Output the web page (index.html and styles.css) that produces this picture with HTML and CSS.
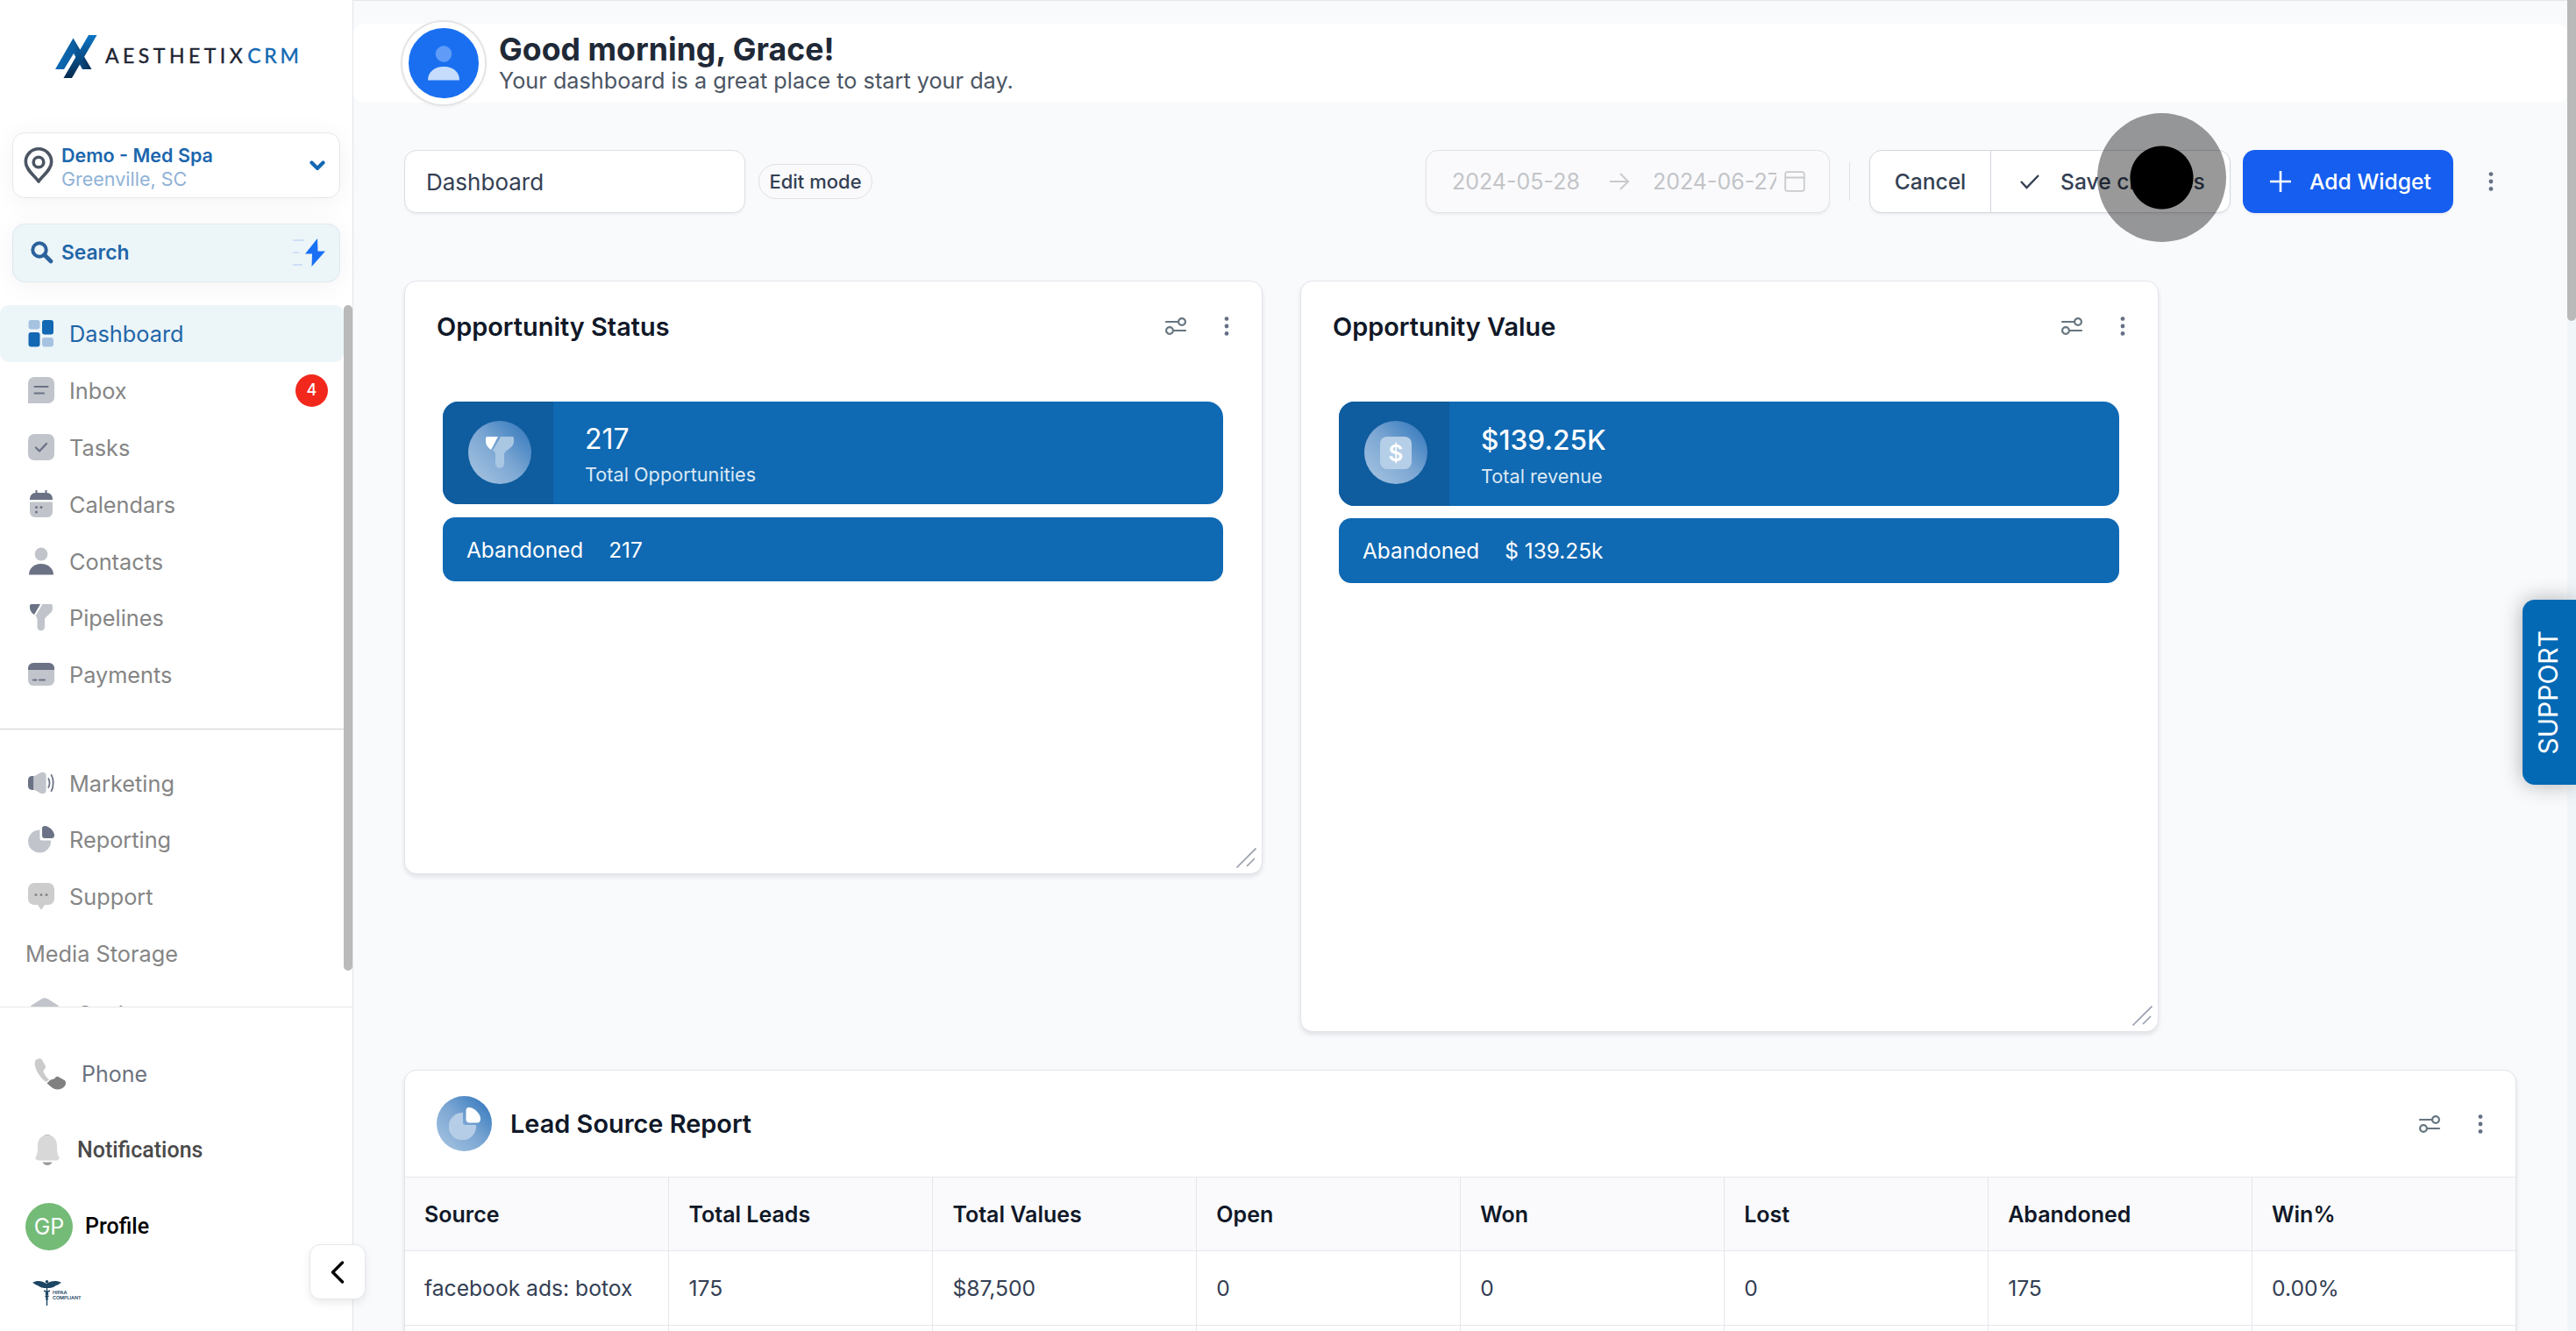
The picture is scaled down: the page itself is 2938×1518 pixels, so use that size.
FILE: index.html
```
<!DOCTYPE html>
<html lang="en">
  <head>
    <meta charset="UTF-8" />
    <meta name="viewport" content="width=device-width, initial-scale=1.0" />
    <title>Dashboard</title>
    <link rel="stylesheet" href="styles.css">
  </head>
  <body>
    <!-- shared icons -->
    <svg class="defs" width="0" height="0">
      <defs>
        <linearGradient id="logo-grad" x1="0" y1="0" x2="0" y2="1">
          <stop offset="0" stop-color="#0a74c4" />
          <stop offset="1" stop-color="#062a50" />
        </linearGradient>
        <linearGradient id="logo-left" x1="0" y1="0" x2="1" y2="0">
          <stop offset="0" stop-color="#0b6ab5" />
          <stop offset=".5" stop-color="#0b5fa3" />
          <stop offset="1" stop-color="#062a50" />
        </linearGradient>
      </defs>
      <symbol id="sliders" viewBox="0 0 24 20">
        <g fill="none" stroke="#66757f" stroke-width="2.2" stroke-linecap="round">
          <path d="M1 5h13.500M9.500 15H23" />
          <circle cx="19" cy="5" r="3.900" />
          <circle cx="5" cy="15" r="3.900" />
        </g>
      </symbol>
      <symbol id="kebab" viewBox="0 0 6 22">
        <g fill="#667085">
          <circle cx="3" cy="2.600" r="2.400" />
          <circle cx="3" cy="11" r="2.400" />
          <circle cx="3" cy="19.400" r="2.400" />
        </g>
      </symbol>
      <symbol id="resize" viewBox="0 0 24 24">
        <path d="M1.500 22.500L23.500 .5M13 21l9-9" stroke="#989fac" stroke-width="1.700" fill="none" />
      </symbol>
    </svg>

    <aside class="sidebar">
      <div class="logo">
        <svg width="48" height="50" viewBox="0 0 48 50">
          <path d="M20.500 3.500L41.500 39H31L21 21 10 39H0z" fill="url(#logo-left)" />
          <path d="M38 0h9.500L19 49H9.500z" fill="url(#logo-grad)" />
        </svg>
        <span class="logo-text">AESTHETIX<b>CRM</b></span>
      </div>

      <div class="location">
        <svg width="34" height="42" viewBox="0 0 34 42" fill="none" stroke="#4b5563" stroke-width="3.600">
          <path d="M17 39C13 32.500 2.300 26 2.300 16.500a14.700 14.700 0 0 1 29.400 0C31.700 26 21 32.500 17 39z" stroke-linejoin="round" />
          <circle cx="17" cy="17" r="5.800" />
        </svg>
        <div class="location-text">
          <p class="location-name">Demo - Med Spa</p>
          <p class="location-city">Greenville, SC</p>
        </div>
        <svg width="18" height="12" viewBox="0 0 18 12"><path d="M2.500 2.500L9 9l6.500-6.500" fill="none" stroke="#1268b3" stroke-width="4.200" stroke-linecap="round" stroke-linejoin="round" /></svg>
      </div>

      <div class="search">
        <svg width="26" height="26" viewBox="0 0 26 26" fill="none" stroke="#2b629b" stroke-width="4"><circle cx="10" cy="10" r="7.700" /><path d="M15.500 15.500l7.500 7.500" stroke-linecap="round" stroke-width="4.600" /></svg>
        <span>Search</span>
        <svg class="bolt" width="38" height="34" viewBox="0 0 38 34">
          <path d="M0 3h13M0 17h7M0 31h11" stroke="#c3d8f3" stroke-width="1.600" />
          <path d="M28 1L14 18.500h8L21.500 33 37 15.500h-8.500z" fill="#1a70f5" />
        </svg>
      </div>

      <div class="nav-area">
        <nav class="nav">
          <a class="nav-item active">
            <svg width="30" height="32" viewBox="0 0 30 32"><g fill="#a5c2e0"><rect x=".5" y="1" width="13" height="10.500" rx="3" /><rect x="16" y="21" width="13" height="10.500" rx="3" /></g><g fill="#1268b3"><rect x="16" y="1" width="13" height="16.500" rx="3" /><rect x=".5" y="15" width="13" height="16.500" rx="3" /></g></svg>
            <span>Dashboard</span>
          </a>
          <a class="nav-item">
            <svg width="30" height="30" viewBox="0 0 30 30"><path d="M7 0h16a7 7 0 0 1 7 7v16a7 7 0 0 1-7 7H0V7a7 7 0 0 1 7-7z" fill="#c1c5cb" /><path d="M7.500 11h15M7.500 18.500H18" stroke="#6b7285" stroke-width="2.200" stroke-linecap="round" /></svg>
            <span>Inbox</span>
            <em class="badge">4</em>
          </a>
          <a class="nav-item">
            <svg width="30" height="30" viewBox="0 0 30 30"><rect width="30" height="30" rx="7" fill="#c1c5cb" /><path d="M9 15.500l4 4 8-8.500" fill="none" stroke="#6b7285" stroke-width="2.300" stroke-linecap="round" stroke-linejoin="round" /></svg>
            <span>Tasks</span>
          </a>
          <a class="nav-item">
            <svg width="30" height="32" viewBox="0 0 30 32"><path d="M2 11c0-5 2.500-8 7-8h12c4.500 0 7 3 7 8z" fill="#6b7285" /><path d="M9.500 0v5M20.500 0v5" stroke="#6b7285" stroke-width="2" /><path d="M2 13.500h26V25a6 6 0 0 1-6 6H8a6 6 0 0 1-6-6z" fill="#c1c5cb" /><g fill="#6b7285"><circle cx="9.500" cy="19.500" r="1.500" /><circle cx="15" cy="19.500" r="1.500" /><circle cx="9.500" cy="25" r="1.500" /></g></svg>
            <span>Calendars</span>
          </a>
          <a class="nav-item">
            <svg width="30" height="32" viewBox="0 0 30 32"><circle cx="15" cy="8" r="7.400" fill="#c1c5cb" /><path d="M1 31.500c0-7 5.500-12.500 13.800-12.500S29 24.500 29 31.500z" fill="#6b7285" /></svg>
            <span>Contacts</span>
          </a>
          <a class="nav-item">
            <svg width="30" height="32" viewBox="0 0 30 32"><path d="M2 3a2 2 0 0 1 2-2h10L7 13c-3-2-5-4.500-5-8z" fill="#6b7285" /><path d="M16.500 1H26a2 2 0 0 1 2 2v3c0 6-9 8.500-9 13v8a4.200 4.200 0 0 1-8.500 0v-8c0-2-.5-3-2-4.500z" fill="#c1c5cb" /></svg>
            <span>Pipelines</span>
          </a>
          <a class="nav-item">
            <svg width="30" height="28" viewBox="0 0 30 28"><path d="M0 9V7a6 6 0 0 1 6-6h18a6 6 0 0 1 6 6v2z" fill="#6b7285" /><path d="M0 9h30v12a6 6 0 0 1-6 6H6a6 6 0 0 1-6-6z" fill="#c1c5cb" /><path d="M6 20.500h3.500M13 20.500h6" stroke="#6b7285" stroke-width="2.200" stroke-linecap="round" /></svg>
            <span>Payments</span>
          </a>
          <hr />
          <a class="nav-item low">
            <svg width="32" height="28" viewBox="0 0 32 28"><path d="M7 5.500v17H5c-3 0-5-2-5-5v-7c0-3 2-5 5-5z" fill="#6b7285" /><path d="M7 5.500c4-.5 6-4 10.500-4.500 3 0 4.500 1.500 4.500 4.500v17c0 3-1.500 4.500-4.500 4.500C13 26.500 11 23 7 22.500z" fill="#c1c5cb" /><path d="M24.500 8c2 3.500 2 8.500 0 12M28 3.500c3.500 6 3.500 15 0 21" stroke="#6b7285" stroke-width="1.900" fill="none" /></svg>
            <span>Marketing</span>
          </a>
          <a class="nav-item low">
            <svg width="30" height="30" viewBox="0 0 30 30"><path d="M13.500 4.500v10a2 2 0 0 0 2 2H26A13 13 0 1 1 13.500 4.500z" fill="#c1c5cb" /><path d="M16 3c0-2 1-3 3-3 5 0 11 6 11 10.500 0 2-1 3.500-3 3.500h-8c-2 0-3-1-3-3z" fill="#6b7285" /></svg>
            <span>Reporting</span>
          </a>
          <a class="nav-item low">
            <svg width="30" height="30" viewBox="0 0 30 30"><path d="M7 0h16a7 7 0 0 1 7 7v11a7 7 0 0 1-7 7h-4l-3 4.500c-.5.700-1.500.700-2 0L11 25H7a7 7 0 0 1-7-7V7a7 7 0 0 1 7-7z" fill="#cdcdcd" /><g fill="#858585"><circle cx="9" cy="13.500" r="1.500" /><circle cx="15" cy="13.500" r="1.500" /><circle cx="21" cy="13.500" r="1.500" /></g></svg>
            <span>Support</span>
          </a>
          <a class="nav-item low">
            <span class="no-icon">Media Storage</span>
          </a>
          <a class="nav-item courses">
            <svg width="34" height="36" viewBox="0 0 34 36"><path d="M13 1.500Q17 -1 21 1.500L32 8.500Q34 10 34 14V36H0V14Q0 10 2 8.500z" fill="#c1c5cb" /></svg>
            <span>Socius</span>
          </a>
        </nav>
        <div class="nav-scroll"></div>
      </div>

      <div class="side-foot">
        <a class="foot-item phone">
          <svg width="38" height="38" viewBox="0 0 38 38"><path d="M2 4C4 1 8 .5 9.500 2l4.500 8c.5 3-3 4-2.500 6 1 3.500 3.500 6.500 6.500 9.500L14.500 28C8 23 0 13 2 4z" fill="#cbcbcb" /><path d="M15.500 29.500l4-4c2-.5 4.500-.5 6-3 1-1 2-1 3-.5l7 4c2 1 2 5 0 7-3 4.500-11 4-14 1.500z" fill="#808080" /></svg>
          <span>Phone</span>
        </a>
        <a class="foot-item bell">
          <svg width="28" height="38" viewBox="0 0 28 38"><path d="M9 4c1-4 9-4 10 0z" fill="#999" /><path d="M14 1.500c7 0 11 5 11 12 0 8 .5 10 2.500 13.500.7 2-2 3.500-4.500 3.500H5c-3 0-5.200-1.500-4.500-3.500C2.500 23.500 3 21.500 3 13.500c0-7 4-12 11-12z" fill="#d8d8d8" /><path d="M8.500 32.500h11c-2 4.500-9 4.500-11 0z" fill="#999" /></svg>
          <span>Notifications</span>
        </a>
        <a class="foot-item profile">
          <i class="initials">GP</i>
          <span>Profile</span>
        </a>
        <div class="hipaa">
          <svg width="33" height="30" viewBox="0 0 33 30" fill="#1d4664">
            <path d="M0 3C5 0 11 .5 16 4 21 .5 28 0 33 3c-3 1-3 2.500-6 3-2 1.500-4 2.500-7 3h-7c-3-.5-5-1.500-7-3C3 5.500 3 4 0 3z" />
            <path d="M16.500 4v25M13 12q7 2.500 3.500 5.500M20 12q-7 2.500-3.500 5.500M14.500 18q4 2 2 5M18.500 18q-4 2-2 5" stroke="#1d4664" stroke-width="1.400" fill="none" />
            <circle cx="16.500" cy="1.800" r="1.800" />
          </svg>
          <p>HIPAA<br />COMPLIANT</p>
        </div>
      </div>
      <button class="collapse" aria-label="Collapse menu"><svg width="16" height="26" viewBox="0 0 16 26"><path d="M13.500 2L2.500 13l11 11" fill="none" stroke="#000" stroke-width="3.400" stroke-linecap="round" stroke-linejoin="round" /></svg></button>
    </aside>

    <main class="main">
      <header class="greeting">
        <div class="avatar">
          <svg width="36" height="40" viewBox="0 0 36 40"><circle cx="18" cy="9.500" r="9.300" fill="#5f9bf7" /><path d="M0 39.500C0 30 7.500 24 18 24s18 6 18 15.500z" fill="#c5dcfc" /></svg>
        </div>
        <div class="greeting-text">
          <h1>Good morning, Grace!</h1>
          <p>Your dashboard is a great place to start your day.</p>
        </div>
      </header>

      <div class="toolbar">
        <div class="name-input">Dashboard</div>
        <span class="mode">Edit mode</span>
        <div class="dates">
          <span class="date">2024-05-28</span>
          <svg width="24" height="22" viewBox="0 0 24 22"><path d="M1 11h21M13 2l9 9-9 9" fill="none" stroke="#c8cacd" stroke-width="2" /></svg>
          <span class="date end">2024-06-27</span>
          <svg class="cal" width="24" height="24" viewBox="0 0 24 24"><path d="M1 7.500h22M3.500 1.200h17A2.300 2.300 0 0 1 22.800 3.500v17a2.300 2.300 0 0 1-2.300 2.300h-17a2.300 2.300 0 0 1-2.300-2.300v-17a2.300 2.300 0 0 1 2.300-2.300z" fill="none" stroke="#c8cacd" stroke-width="1.800" /></svg>
        </div>
        <div class="divider"></div>
        <div class="btn-group">
          <button class="cancel">Cancel</button>
          <button class="save">
            <svg width="24" height="18" viewBox="0 0 24 18"><path d="M2 9l6.500 7L22 2" fill="none" stroke="#344054" stroke-width="2.400" /></svg>
            <span>Save changes</span>
          </button>
          <div class="pointer"></div>
        </div>
        <button class="add">
          <svg width="26" height="26" viewBox="0 0 26 26"><path d="M13 1v24M1 13h24" stroke="#fff" stroke-width="2.600" /></svg>
          <span>Add Widget</span>
        </button>
        <svg class="more" width="6" height="22"><use href="#kebab" /></svg>
      </div>

      <div class="cards">
        <section class="card status">
          <div class="card-head">
            <h2>Opportunity Status</h2>
            <svg width="24" height="20"><use href="#sliders" /></svg>
            <svg class="more" width="6" height="22"><use href="#kebab" /></svg>
          </div>
          <div class="total">
            <div class="total-icon">
              <div class="disc">
                <svg width="32" height="36" viewBox="0 0 32 36"><path d="M0 2.500A2 2 0 0 1 2 0h12L6 15C2 12 0 9 0 5z" fill="#fff" /><path d="M17 0h12.500A2 2 0 0 1 32 2.500V6c0 7-11 9.500-11 14.500V31a5 5 0 0 1-10 0V20.500c0-2-1-3.500-3-4.500z" fill="#a9c6e3" /></svg>
              </div>
            </div>
            <div class="total-text">
              <p class="big">217</p>
              <p class="small">Total Opportunities</p>
            </div>
          </div>
          <div class="stage"><span>Abandoned</span><span>217</span></div>
          <svg class="resize" width="24" height="24"><use href="#resize" /></svg>
        </section>

        <section class="card value">
          <div class="card-head">
            <h2>Opportunity Value</h2>
            <svg width="24" height="20"><use href="#sliders" /></svg>
            <svg class="more" width="6" height="22"><use href="#kebab" /></svg>
          </div>
          <div class="total">
            <div class="total-icon">
              <div class="disc"><span class="dollar">$</span></div>
            </div>
            <div class="total-text">
              <p class="big">$139.25K</p>
              <p class="small">Total revenue</p>
            </div>
          </div>
          <div class="stage"><span>Abandoned</span><span>$ 139.25k</span></div>
          <svg class="resize" width="24" height="24"><use href="#resize" /></svg>
        </section>
      </div>

      <section class="card report">
        <div class="card-head">
          <div class="disc">
            <svg width="36" height="37" viewBox="0 0 36 37"><path d="M16 6v11a3 3 0 0 0 3 3h12A15.700 15.700 0 1 1 16 6z" fill="#b5cde6" /><path d="M19.500 4c0-2.500 1-4 3.500-4 6 0 13 7.500 13 13 0 3-1.500 4.500-4 4.500h-8.500c-2.500 0-4-1.500-4-4z" fill="#fff" /></svg>
          </div>
          <h2>Lead Source Report</h2>
          <svg width="24" height="20"><use href="#sliders" /></svg>
          <svg class="more" width="6" height="22"><use href="#kebab" /></svg>
        </div>
        <table>
          <tr>
            <th>Source</th>
            <th>Total Leads</th>
            <th>Total Values</th>
            <th>Open</th>
            <th>Won</th>
            <th>Lost</th>
            <th>Abandoned</th>
            <th>Win%</th>
          </tr>
          <tr>
            <td>facebook ads: botox</td>
            <td>175</td>
            <td>$87,500</td>
            <td>0</td>
            <td>0</td>
            <td>0</td>
            <td>175</td>
            <td>0.00%</td>
          </tr>
          <tr class="next">
            <td></td>
            <td></td>
            <td></td>
            <td></td>
            <td></td>
            <td></td>
            <td></td>
            <td></td>
          </tr>
        </table>
      </section>
    </main>

    <div class="page-scroll"><div class="thumb"></div></div>
    <div class="support-tab"><span>SUPPORT</span></div>
  </body>
</html>
```

FILE: styles.css
```
* {
  box-sizing: border-box;
}
body {
  margin: 0;
  height: 1518px;
  display: flex;
  overflow: hidden;
  position: relative;
  background-color: #f9fafc;
  font-family: Inter, "Liberation Sans", sans-serif;
  font-size: 25px;
  font-optical-sizing: none;
  color: #344054;
}
p, h1, h2 {
  margin: 0;
}
svg {
  display: block;
  flex-shrink: 0;
}
button {
  font: inherit;
  color: inherit;
  border: none;
  padding: 0;
}
.defs {
  position: absolute;
}

/* sidebar */
.sidebar {
  width: 403px;
  height: 1518px;
  flex-shrink: 0;
  background-color: #fff;
  border-right: 1px solid #e3e6ea;
  position: relative;
  display: flex;
  flex-direction: column;
}
.logo {
  height: 151px;
  padding: 40px 0 0 63px;
  display: flex;
  align-items: flex-start;
}
.logo-text {
  font-family: Lato, sans-serif;
  font-size: 23px;
  line-height: 46px;
  letter-spacing: 4.5px;
  margin-left: 9px;
  color: #1e2433;
  -webkit-text-stroke: 0.4px;
}
.logo-text b {
  font-weight: 400;
  letter-spacing: 3.8px;
  margin-left: 1px;
  color: #1268b3;
}
.location {
  margin: 0 14px;
  height: 75px;
  border: 1px solid #e5e7eb;
  border-radius: 14px;
  box-shadow: 0 4px 30px rgba(0, 0, 0, 0.05);
  display: flex;
  align-items: center;
  padding: 0 16px 0 12px;
}
.location-text {
  flex: 1;
  margin-left: 9px;
  padding-top: 4px;
  font-size: 21.5px;
  line-height: 27px;
}
.location-name {
  color: #1b66ad;
  font-weight: 600;
}
.location-city {
  color: #8fb2d6;
}
.search {
  margin: 29px 14px 0;
  height: 67px;
  border: 1px solid #dfe8ee;
  border-radius: 14px;
  background-color: #ecf5f8;
  box-shadow: 0 4px 30px rgba(0, 0, 0, 0.05);
  display: flex;
  align-items: center;
  padding: 0 15px 2px 20px;
  color: #1f65a8;
  font-size: 22.8px;
  font-weight: 600;
}
.search span {
  margin-left: 9px;
}
.bolt {
  margin-left: auto;
}
.nav-area {
  margin-top: 26px;
  height: 800px;
  flex-shrink: 0;
  overflow: hidden;
  display: flex;
}
.nav {
  width: 392px;
}
.nav-item {
  height: 64.8px;
  padding: 0 18px 0 32px;
  display: flex;
  align-items: center;
  color: #858585;
  font-size: 25.3px;
}
.nav-item.low {
  height: 64.6px;
}
.nav-item svg {
  width: 30px;
  overflow: visible;
}
.nav-item span {
  margin-left: 17px;
  padding-top: 1px;
}
.nav-item .no-icon {
  margin-left: -3px;
}
.nav-item.active {
  background-color: #ecf5f8;
  border-radius: 10px;
  color: #1f65a8;
}
.nav-item.courses {
  padding-left: 34px;
  height: 74px;
}
.nav-item.courses svg {
  width: 34px;
}
.nav-item.courses span {
  margin-left: 21px;
}
.badge {
  margin-left: auto;
  width: 37px;
  height: 37px;
  border-radius: 50%;
  background-color: #f2281c;
  color: #fff;
  font-size: 18px;
  font-style: normal;
  font-weight: 500;
  line-height: 36px;
  text-align: center;
}
.nav hr {
  margin: 29px 0;
  border: none;
  height: 1px;
  background-color: #d0d0d0;
}
.nav-scroll {
  width: 10px;
  height: 759px;
  border-radius: 5px;
  background-color: #bababa;
}
.side-foot {
  border-top: 1px solid #e8e8e8;
  flex: 1;
  padding: 32px 0 0 29px;
}
.foot-item {
  height: 87px;
  display: flex;
  align-items: center;
}
.phone {
  padding-left: 9px;
  color: #6b7280;
}
.phone span {
  margin-left: 17px;
}
.bell,
.profile {
  font-family: Roboto, sans-serif;
  font-weight: 500;
}
.bell {
  padding-left: 11px;
  color: #4a4a4a;
}
.bell span {
  margin-left: 20px;
}
.profile {
  color: #000;
}
.profile span {
  margin-left: 14px;
}
.initials {
  width: 54px;
  height: 54px;
  border-radius: 50%;
  background-color: #74bb78;
  color: #fff;
  font-family: Inter, sans-serif;
  font-style: normal;
  font-weight: 400;
  line-height: 54px;
  text-align: center;
}
.hipaa {
  display: flex;
  margin: 18px 0 0 8px;
}
.hipaa p {
  margin: 12px 0 0 -10px;
  font-size: 5.400px;
  line-height: 5.500px;
  font-weight: 600;
  color: #1d4664;
}
.collapse {
  position: absolute;
  left: 353px;
  top: 1419px;
  width: 64px;
  height: 63px;
  border: 1px solid #e5e7eb;
  border-radius: 12px;
  background-color: #fff;
  box-shadow: 0 4px 10px rgba(0, 0, 0, 0.08);
  display: flex;
  align-items: center;
  justify-content: center;
}

/* main area */
.main {
  width: 2525px;
  height: 1518px;
  overflow: hidden;
  border-top: 1px solid #e5e7eb;
  padding-top: 26px;
}
.greeting {
  height: 90px;
  background-color: #fff;
  border-radius: 12px;
  display: flex;
  align-items: center;
  padding-left: 56px;
}
.avatar {
  width: 94px;
  height: 94px;
  flex-shrink: 0;
  border: 7px solid #fff;
  border-radius: 50%;
  background-color: #196ff0;
  box-shadow: 0 0 0 2px #e4e4e4, 0 1px 5px rgba(0, 0, 0, 0.12);
  display: flex;
  align-items: center;
  justify-content: center;
}
.greeting-text {
  margin-left: 16px;
  padding-top: 3px;
}
.greeting h1 {
  font-size: 35.700px;
  line-height: 38px;
  font-weight: 700;
  color: #1f2937;
}
.greeting p {
  font-size: 25.250px;
  line-height: 35px;
  color: #4b5563;
}
.toolbar {
  margin: 54px 0 0 58px;
  width: 2408px;
  height: 72px;
  display: flex;
  align-items: center;
  padding-right: 25px;
}
.name-input {
  width: 389px;
  height: 72px;
  border: 1px solid #dcdfe4;
  border-radius: 14px;
  background-color: #fff;
  box-shadow: 0 2px 3px rgba(16, 24, 40, 0.05);
  padding-left: 24px;
  line-height: 72px;
  font-size: 26px;
}
.mode {
  margin-left: 15px;
  width: 130px;
  height: 40px;
  border: 1px solid #e0e0e6;
  border-radius: 20px;
  background-color: #fafafc;
  font-size: 22px;
  font-weight: 500;
  line-height: 39px;
  text-align: center;
}
.dates {
  margin-left: auto;
  width: 461px;
  height: 72px;
  border: 1px solid #e0e2e6;
  border-radius: 14px;
  background-color: #fafafc;
  box-shadow: 0 2px 3px rgba(16, 24, 40, 0.05);
  display: flex;
  align-items: center;
  padding-left: 29px;
  color: #c2c4c8;
}
.date {
  width: 146px;
  margin-right: 33px;
  white-space: nowrap;
}
.date.end {
  width: 141px;
  overflow: hidden;
  margin: 0 9px 0 26px;
}
.divider {
  width: 1px;
  height: 44px;
  margin: 0 22px;
  background-color: #dfe1e6;
}
.btn-group {
  width: 412px;
  height: 72px;
  border: 1px solid #d3d7de;
  border-radius: 14px;
  background-color: #fff;
  box-shadow: 0 2px 3px rgba(16, 24, 40, 0.05);
  display: flex;
  font-size: 24.600px;
  font-weight: 500;
  position: relative;
}
.btn-group button {
  background-color: transparent;
}
.btn-group .cancel {
  width: 138px;
  border-right: 1px solid #d3d7de;
}
.save {
  display: flex;
  align-items: center;
  padding-left: 32px;
}
.save span {
  margin-left: 23px;
}
/* click marker sits over the save button */
.pointer {
  position: absolute;
  left: 259px;
  top: -43px;
  width: 147px;
  height: 147px;
  border-radius: 50%;
  background: radial-gradient(circle, #000 35.5px, rgba(0, 0, 0, 0.4) 36.5px);
}
.add {
  margin-left: 14px;
  width: 240px;
  height: 72px;
  border-radius: 14px;
  background-color: #155eef;
  box-shadow: 0 2px 3px rgba(16, 24, 40, 0.05);
  color: #fff;
  font-size: 24.700px;
  font-weight: 500;
  display: flex;
  align-items: center;
  padding-left: 30px;
}
.add span {
  margin-left: 20px;
}
.toolbar .more {
  margin-left: 40px;
}

/* widgets */
.cards {
  margin: 77px 0 0 58px;
  height: 900px;
  display: flex;
  align-items: flex-start;
  gap: 43px;
}
.card {
  width: 979px;
  height: 677px;
  border: 1px solid #e2e5e9;
  border-radius: 14px;
  background-color: #fff;
  box-shadow: 0 3px 5px rgba(16, 24, 40, 0.1);
  position: relative;
}
.card.value {
  height: 857px;
}
.card-head {
  height: 102px;
  display: flex;
  align-items: center;
  padding: 0 37px 0 36px;
}
.card-head h2 {
  flex: 1;
  font-size: 28.900px;
  font-weight: 600;
  color: #101828;
}
.card-head .more {
  margin-left: 43px;
}
.total {
  margin: 35px 44px 0 43px;
  height: 117px;
  border-radius: 18px;
  background-color: #0f69b3;
  color: #fff;
  display: flex;
  overflow: hidden;
}
.total-icon {
  width: 126px;
  background-color: #0f5c9e;
  padding: 22px 0 0 29px;
}
.disc {
  width: 72px;
  height: 72px;
  border-radius: 50%;
  background: linear-gradient(45deg, #a9c6e2, #7ba6d3 50%, #2a72b9);
  display: flex;
  align-items: center;
  justify-content: center;
}
.total-text {
  padding: 23px 0 0 36px;
}
.big {
  font-size: 32px;
  line-height: 40px;
}
.small {
  margin-top: 4px;
  font-size: 21.700px;
  line-height: 32px;
  color: #dbe8f4;
}
.value .total {
  height: 119px;
}
.value .big {
  margin-top: 1px;
  font-size: 31.600px;
  font-weight: 500;
}
.value .small {
  margin-top: 5px;
}
.dollar {
  width: 36px;
  height: 37px;
  border-radius: 8px;
  background-color: #b6cfe8;
  font-size: 26px;
  font-weight: 600;
  line-height: 37px;
  text-align: center;
}
.stage {
  margin: 15px 44px 0 43px;
  height: 73px;
  border-radius: 14px;
  background-color: #0f69b3;
  color: #fff;
  font-size: 24.400px;
  display: flex;
  align-items: center;
  gap: 29px;
  padding-left: 27px;
}
.value .stage {
  margin-top: 14px;
  height: 74px;
}
.resize {
  position: absolute;
  right: 6px;
  bottom: 5px;
}

/* lead source table */
.report {
  margin-left: 58px;
  width: 2409px;
  height: 400px;
  overflow: hidden;
}
.report .card-head {
  height: 121px;
}
.report .disc {
  width: 63px;
  height: 63px;
  margin-right: 21px;
}
table {
  width: 2408px;
  table-layout: fixed;
  border-collapse: collapse;
}
th, td {
  height: 85px;
  padding: 0 0 0 22px;
  border-top: 1px solid #e5e7eb;
  border-right: 1px solid #e5e7eb;
  text-align: left;
  white-space: nowrap;
}
th {
  height: 84px;
  background-color: #fafafc;
  font-weight: 600;
  color: #101828;
}
td {
  font-size: 24.650px;
}

.page-scroll {
  width: 10px;
  height: 1518px;
  background-color: #f0f5f9;
}
.thumb {
  height: 366px;
  border-radius: 0 0 5px 5px;
  background-color: #b9b9b9;
}
.support-tab {
  position: absolute;
  right: 0;
  top: 684px;
  width: 61px;
  height: 211px;
  border-radius: 14px 0 0 14px;
  background-color: #0369b5;
  box-shadow: 0 0 24px rgba(0, 0, 0, 0.3);
  color: #fff;
  font-size: 30px;
  display: flex;
  align-items: center;
  justify-content: center;
  padding-right: 4px;
}
.support-tab span {
  writing-mode: vertical-rl;
  transform: rotate(180deg);
}
```
